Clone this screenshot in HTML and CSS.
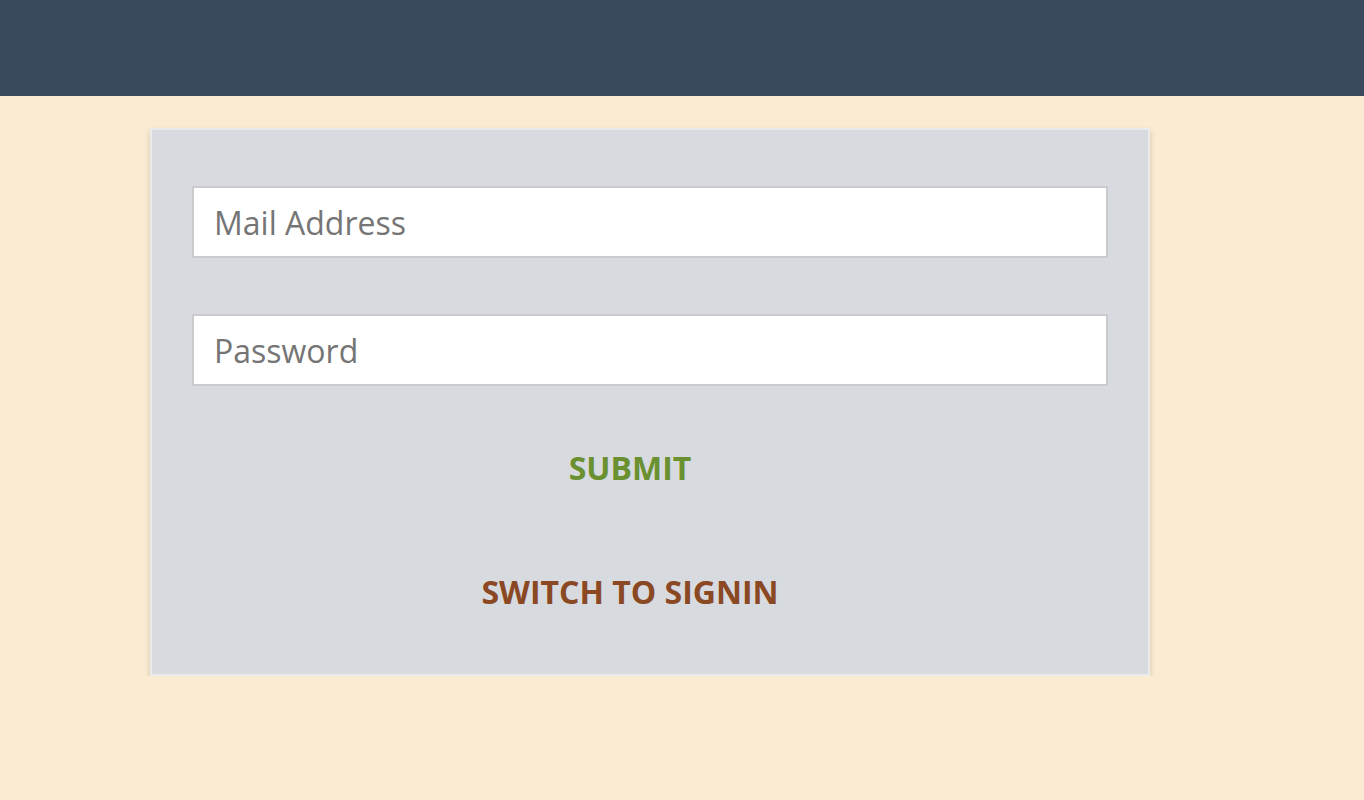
FILE: index.html
```html
<!DOCTYPE html>
<html>
<head>
<meta charset="utf-8">
<link rel="stylesheet" href="styles.css">
</head>
<body>
<header class="topbar"></header>
<main class="page">
  <form class="card">
    <input class="field" type="email" placeholder="Mail Address">
    <input class="field" type="password" placeholder="Password">
    <div class="actions">
      <button type="button" class="btn btn-submit">SUBMIT</button>
      <button type="button" class="btn btn-switch">SWITCH TO SIGNIN</button>
    </div>
  </form>
</main>
</body>
</html>
```
FILE: styles.css
```css
html, body {
  margin: 0;
  padding: 0;
  background: #fbebd2;
  font-family: "Open Sans", "Liberation Sans", sans-serif;
}
.topbar {
  height: 96px;
  background: #394a5c;
}
.page {
  padding: 32px 0 0 150px;
}
.card {
  box-sizing: border-box;
  width: 1000px;
  background: #d7dadf;
  border: 2px solid #ebebeb;
  box-shadow: 0 3px 6px rgba(0,0,0,0.16);
  padding: 56px 40px 0 40px;
  height: 548px;
  display: flex;
  flex-direction: column;
  gap: 56px;
}
.field {
  box-sizing: border-box;
  width: 916px;
  height: 72px;
  border: 2px solid #cbcbcd;
  background: #fff;
  padding: 0 20px;
  font-family: "Open Sans", "Liberation Sans", sans-serif;
  font-size: 32px;
  color: #757575;
  outline: none;
}
.field::placeholder {
  color: #757575;
  opacity: 1;
}
.actions {
  display: flex;
  flex-direction: column;
  align-items: center;
  margin-right: 40px;
  gap: 80px;
  margin-top: 4px;
}
.btn {
  background: none;
  border: none;
  padding: 0;
  font-family: "Open Sans", "Liberation Sans", sans-serif;
  font-weight: 700;
  font-size: 32px;
  line-height: 44px;
  cursor: pointer;
}
.btn-submit { color: #6a9030; }
.btn-switch { color: #8a4823; }
```
